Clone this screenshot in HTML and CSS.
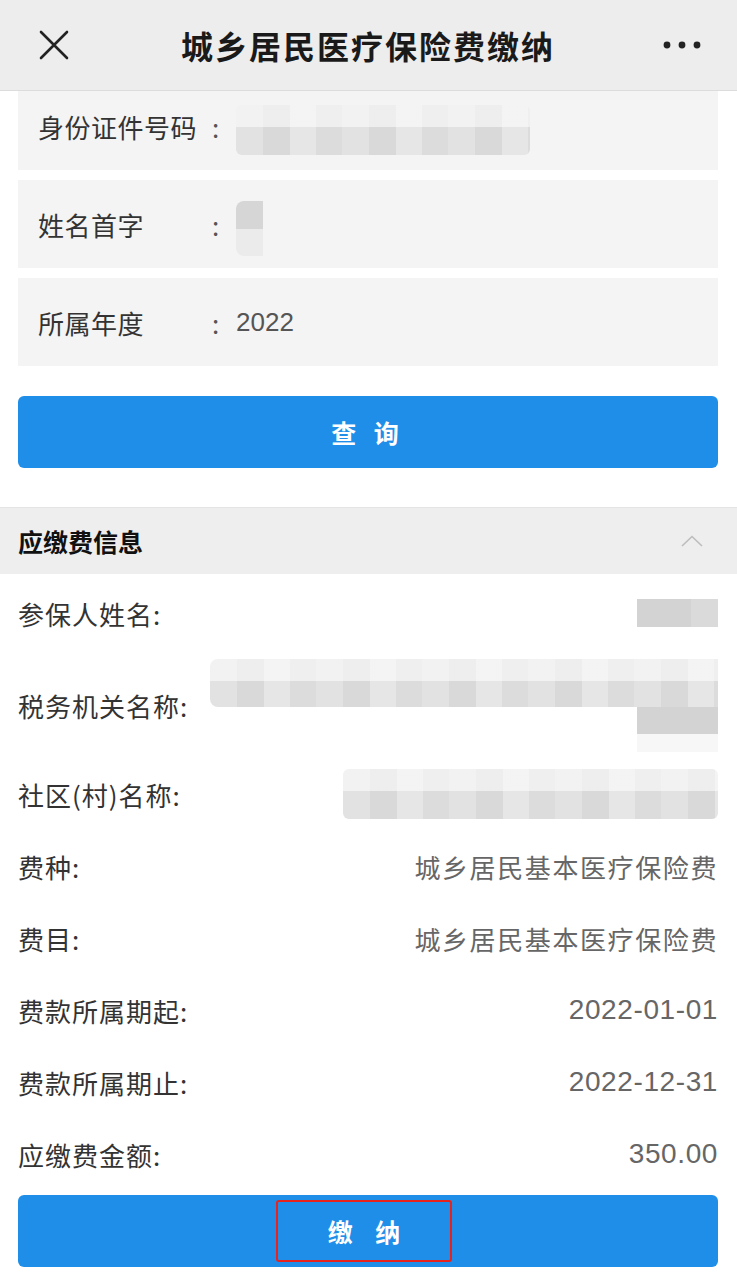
FILE: index.html
```html
<!DOCTYPE html>
<html lang="zh-CN">
<head>
  <meta charset="UTF-8">
  <meta name="viewport" content="width=device-width, initial-scale=1.0">
  <title>城乡居民医疗保险费缴纳</title>
  <link rel="stylesheet" href="styles.css">
</head>
<body>

  <!-- Top navigation bar -->
  <div class="navbar">
    <span class="nav-close">
      <svg width="30" height="30" viewBox="0 0 30 30">
        <path d="M2 2 L28 28 M28 2 L2 28" stroke="#222" stroke-width="2.6" stroke-linecap="round" fill="none"/>
      </svg>
    </span>
    <h1 class="nav-title">城乡居民医疗保险费缴纳</h1>
    <span class="nav-more">
      <svg width="38" height="8" viewBox="0 0 38 8">
        <circle cx="4" cy="4" r="3.4" fill="#222"/>
        <circle cx="19" cy="4" r="3.4" fill="#222"/>
        <circle cx="34" cy="4" r="3.4" fill="#222"/>
      </svg>
    </span>
  </div>

  <!-- Query form -->
  <div class="query">
    <div class="field first">
      <span class="field-label">身份证件号码</span>
      <span class="field-colon">:</span>
      <span class="mask mask-id"></span>
    </div>
    <div class="field">
      <span class="field-label">姓名首字</span>
      <span class="field-colon">:</span>
      <span class="mask mask-initial"></span>
    </div>
    <div class="field">
      <span class="field-label">所属年度</span>
      <span class="field-colon">:</span>
      <span class="field-value">2022</span>
    </div>

    <button type="button" class="btn">查&nbsp;询</button>
  </div>

  <!-- Payment info -->
  <div class="section-head">
    <span>应缴费信息</span>
    <svg width="22" height="12" viewBox="0 0 22 12">
      <path d="M1 11 L11 1.5 L21 11" stroke="#bdbdbd" stroke-width="1.6" fill="none"/>
    </svg>
  </div>

  <div class="info">
    <div class="info-row">
      <span class="info-label">参保人姓名:</span>
      <span class="mask mask-name"></span>
    </div>
    <div class="info-row tall">
      <span class="info-label">税务机关名称:</span>
      <span class="mask-stack">
        <span class="mask mask-org"></span>
        <span class="mask mask-org2"></span>
      </span>
    </div>
    <div class="info-row">
      <span class="info-label">社区(村)名称:</span>
      <span class="mask mask-village"></span>
    </div>
    <div class="info-row">
      <span class="info-label">费种:</span>
      <span class="info-value">城乡居民基本医疗保险费</span>
    </div>
    <div class="info-row">
      <span class="info-label">费目:</span>
      <span class="info-value">城乡居民基本医疗保险费</span>
    </div>
    <div class="info-row">
      <span class="info-label">费款所属期起:</span>
      <span class="info-value num">2022-01-01</span>
    </div>
    <div class="info-row">
      <span class="info-label">费款所属期止:</span>
      <span class="info-value num">2022-12-31</span>
    </div>
    <div class="info-row">
      <span class="info-label">应缴费金额:</span>
      <span class="info-value num">350.00</span>
    </div>

    <button type="button" class="btn btn-pay"><span class="pay-mark">缴&nbsp;&nbsp;&nbsp;&nbsp;纳</span></button>
  </div>

</body>
</html>
```

FILE: styles.css
```css
* {
  box-sizing: border-box;
  margin: 0;
  padding: 0;
}
body {
  font-family: "Noto Sans CJK SC", "Noto Sans", sans-serif;
  background-color: #fff;
  color: #333;
  width: 737px;
  overflow: hidden;
}

/* navbar */
.navbar {
  position: relative;
  z-index: 2;
  height: 91px;
  background-color: #ededed;
  border-bottom: 1px solid #dcdcdc;
  display: flex;
  align-items: center;
  justify-content: space-between;
  padding: 0 36px 0 39px;
}
.nav-close {
  display: flex;
  width: 30px;
  height: 30px;
}
.nav-title {
  font-size: 32px;
  font-weight: 700;
  color: #1a1a1a;
  letter-spacing: 2px;
  margin-left: 4px;
}
.nav-more {
  display: flex;
}

/* query form */
.query {
  padding: 0 19px 0 18px;
  display: flex;
  flex-direction: column;
  gap: 10px;
}
.field {
  height: 88px;
  background-color: #f4f4f4;
  display: flex;
  align-items: center;
  padding-left: 20px;
  font-size: 26px;
}
.field.first {
  margin-top: -9px;
}
.field-label {
  width: 174px;
  color: #333;
  letter-spacing: 0.5px;
}
.field-colon {
  width: 24px;
  color: #555;
}
.field-value {
  font-family: "Liberation Sans", Roboto, sans-serif;
  color: #555;
  font-size: 26px;
}
.btn {
  height: 72px;
  border: none;
  border-radius: 6px;
  background-color: #1f8ee9;
  color: #fff;
  font-family: "Noto Sans CJK SC", sans-serif;
  font-size: 25px;
  font-weight: 700;
  letter-spacing: 6px;
  cursor: pointer;
}
.query .btn {
  margin-top: 20px;
}

/* mosaic placeholders for hidden personal data */
.mask {
  display: block;
  border-radius: 6px;
  background:
    linear-gradient(to bottom, rgba(255,255,255,0.55) 0 45%, rgba(0,0,0,0) 45%),
    repeating-linear-gradient(to right, #e2e2e2 0 27px, #d9d9d9 27px 54px, #e6e6e6 54px 80px, #dcdcdc 80px 106px);
}
.mask-id {
  width: 294px;
  height: 50px;
  margin-top: 8px;
}
.mask-initial {
  width: 27px;
  height: 55px;
  margin-top: 8px;
  border-radius: 8px 0 0 8px;
  background: linear-gradient(to bottom, #d6d6d6 0 50%, #ebebeb 50%);
}
.mask-name {
  width: 81px;
  height: 28px;
  border-radius: 0;
  background: linear-gradient(to right, #d3d3d3 0 54px, #dadada 54px);
}
.mask-stack {
  display: flex;
  flex-direction: column;
  align-items: flex-end;
}
.mask-org {
  width: 508px;
  height: 48px;
  border-radius: 8px 0 0 8px;
}
.mask-org2 {
  width: 81px;
  height: 45px;
  border-radius: 0;
  background: linear-gradient(to bottom, #d3d3d3 0 60%, #f7f7f7 60%);
}
.mask-village {
  width: 375px;
  height: 50px;
}

/* section header */
.section-head {
  margin-top: 39px;
  height: 67px;
  background-color: #eeeeee;
  border-top: 1px solid #e4e4e4;
  display: flex;
  align-items: center;
  justify-content: space-between;
  padding: 0 34px 0 18px;
  font-size: 25px;
  font-weight: 700;
  color: #111;
}

/* info rows */
.info {
  padding: 0 19px 0 18px;
  display: flex;
  flex-direction: column;
}
.info-row {
  height: 72px;
  display: flex;
  align-items: center;
  justify-content: space-between;
  font-size: 26px;
}
.info-row:first-child {
  height: 78px;
}
.info-row.tall {
  height: 106px;
}
.info-label {
  color: #333;
  letter-spacing: 1px;
  white-space: nowrap;
}
.info-value {
  color: #666;
  letter-spacing: 1.6px;
}
.info-value.num {
  font-family: "Liberation Sans", Roboto, sans-serif;
  font-size: 28px;
  letter-spacing: 0.6px;
}
.btn-pay {
  margin-top: 5px;
  display: flex;
  align-items: center;
  justify-content: center;
}
.pay-mark {
  display: flex;
  align-items: center;
  justify-content: center;
  width: 176px;
  height: 62px;
  margin-right: 8px;
  border: 2px solid #e8221d;
  border-radius: 3px;
  letter-spacing: 0;
}
```
